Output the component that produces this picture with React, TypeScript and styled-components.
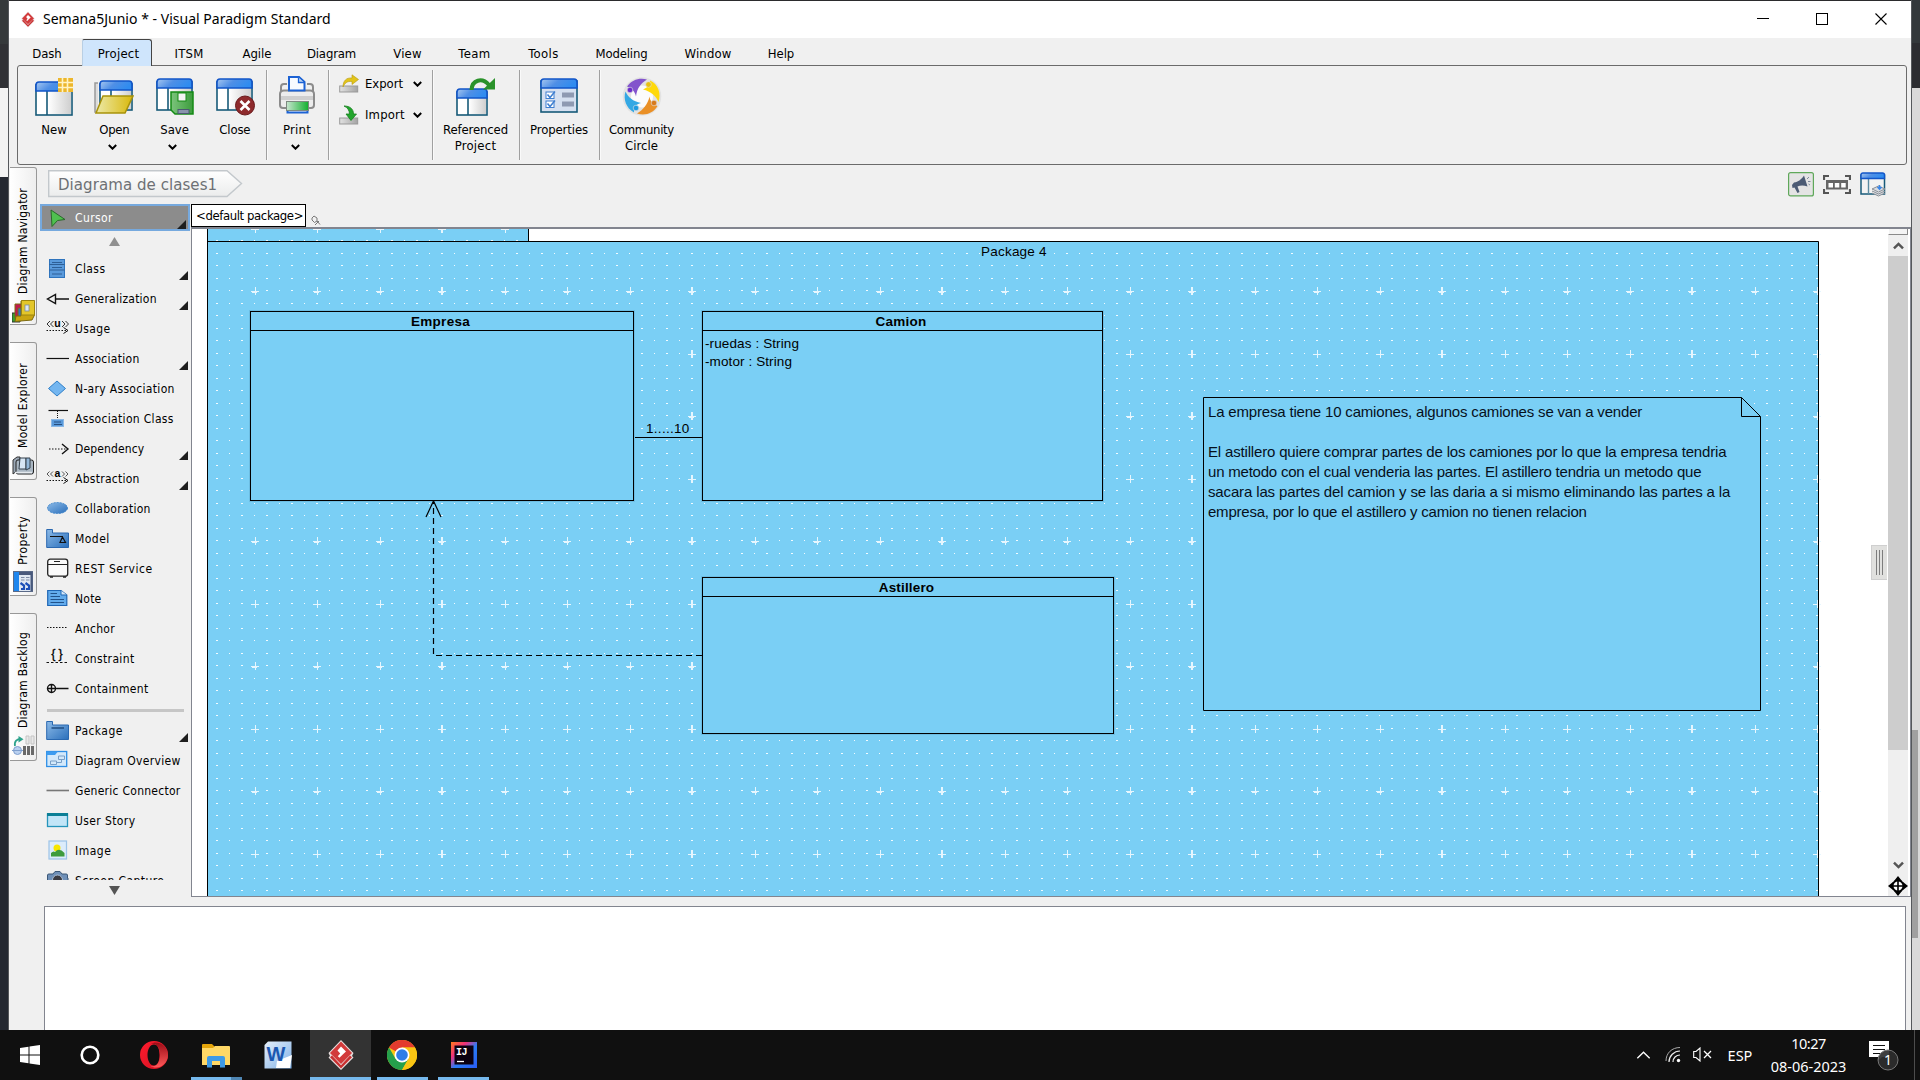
import React from "react";
import styled, { createGlobalStyle, css } from "styled-components";

const ui = `"DejaVu Sans Condensed", "DejaVu Sans", sans-serif`;
const segoe = `"Noto Sans", "Open Sans", sans-serif`;
const arial = `"Liberation Sans", Arial, sans-serif`;

const GlobalStyle = createGlobalStyle`
  *, *::before, *::after { box-sizing: border-box; }
  html, body { margin: 0; padding: 0; background: #fff; overflow: hidden; }
  svg { display: block; flex: none; }
`;

/* ---------- text ---------- */

const Label = styled.span<{ $ls?: number; $size?: number }>`
  font-family: ${ui};
  font-size: ${(p) => p.$size ?? 13}px;
  letter-spacing: ${(p) => p.$ls ?? 0}px;
  line-height: 16px;
  white-space: nowrap;
`;

/* ---------- shell ---------- */

const Desktop = styled.div`
  display: flex;
  flex-direction: column;
  width: 1920px;
  height: 1080px;
  overflow: hidden;
  background: #f0f0f0;
  color: #000;
  font-family: ${ui};
`;

const WorkArea = styled.div`
  display: flex;
  height: 1030px;
`;

const LeftEdge = styled.div`
  width: 9px;
  border-right: 1px solid #55585c;
  background: linear-gradient(#35393b 0 44px, #303135 44px 88px, #f3f3f3 88px 177px, #242831 177px);
`;

const RightEdge = styled.div`
  width: 9px;
  border-left: 1px solid #55585c;
  display: flex;
  flex-direction: column;
  background: linear-gradient(#33383b 0 43px, #2c2d31 43px 88px, #d9d9d9 88px);
`;

const RightThumb = styled.div`
  margin-top: 730px;
  width: 6px;
  height: 208px;
  background: #a0a0a0;
`;

const Window = styled.div`
  flex: 1;
  display: flex;
  flex-direction: column;
  min-width: 0;
  border-top: 1px solid #2b2b2d;
  background: #f0f0f0;
`;

const TitleBar = styled.div`
  display: flex;
  align-items: center;
  height: 37px;
  padding: 0 24px 1px 12px;
  background: #fff;
`;

const Title = styled(Label)`
  font-family: ${segoe};
  margin-left: 8px;
  flex: 1;
  line-height: 20px;
`;

const WindowControls = styled.div`
  display: flex;
  gap: 47px;
`;

const MenuBar = styled.div`
  display: flex;
  height: 27px;
  padding: 1px 0 0 3px;
`;

const MenuItem = styled.div<{ $w: number; $active?: boolean }>`
  display: flex;
  align-items: center;
  justify-content: center;
  width: ${(p) => p.$w}px;
  height: 27px;
  padding-top: 2px;
  ${(p) =>
    p.$active &&
    css`
      position: relative;
      z-index: 1;
      padding-left: 3px;
      background: #cfe5fc;
      border: 1px solid #444;
      border-left-color: #b9cfe4;
      border-bottom: 0;
      border-radius: 2px 3px 0 0;
    `}
`;

const Ribbon = styled.div`
  display: flex;
  height: 100px;
  margin: 0 4px 0 8px;
  padding: 4px 0 0 6px;
  border: 1px solid #6b6b6b;
  border-radius: 3px;
`;

const Group = styled.div<{ $w: number }>`
  display: flex;
  width: ${(p) => p.$w}px;
  height: 90px;
  padding-right: 1px;
  border-right: 1px solid #a0a0a0;
  box-shadow: 1px 0 0 #fafafa;
`;

const LastGroup = styled(Group)`
  border-right: 0;
  box-shadow: none;
`;

const RibbonButton = styled.div`
  flex: 1;
  display: flex;
  flex-direction: column;
  align-items: center;
  padding-top: 6px;
  text-align: center;
`;

const ButtonCaption = styled.div`
  display: flex;
  flex-direction: column;
  align-items: center;
  margin-top: 6px;
`;

const DropArrow = styled.div`
  margin: 6px 4px 0 0;
`;

const StackedGroup = styled(Group)`
  flex-direction: column;
  gap: 11px;
  padding: 4px 0 0 10px;
`;

const StackedButton = styled.div`
  display: flex;
  align-items: center;
  height: 20px;
  gap: 6px;
`;

const StackedLabel = styled(Label)`
  width: 42px;
`;

const Body = styled.div`
  flex: 1;
  display: flex;
  min-height: 0;
`;

/* ---------- side tabs ---------- */

const SideTabs = styled.div`
  display: flex;
  flex-direction: column;
  gap: 17px;
  width: 31px;
  padding: 2px 0 0 1px;
`;

const SideTab = styled.div<{ $h: number; $gap: number; $pb: number }>`
  display: flex;
  flex-direction: column;
  align-items: center;
  justify-content: flex-end;
  width: 27px;
  height: ${(p) => p.$h}px;
  padding-bottom: ${(p) => p.$pb}px;
  gap: ${(p) => p.$gap}px;
  border: 1px solid #989898;
  border-left: 0;
  border-radius: 0 3px 3px 0;
  background: linear-gradient(90deg, #fff, #eee);
`;

const VerticalLabel = styled(Label)`
  writing-mode: vertical-rl;
  transform: rotate(180deg);
`;

/* ---------- main ---------- */

const Main = styled.div`
  flex: 1;
  display: flex;
  flex-direction: column;
  min-width: 0;
`;

const PathBar = styled.div`
  display: flex;
  align-items: center;
  justify-content: space-between;
  height: 39px;
  padding: 0 25px 0 8px;
`;

const Crumb = styled.div`
  display: grid;
  width: 195px;
  height: 28px;
  margin-top: -2px;
  & > * {
    grid-area: 1 / 1;
  }
`;

const CrumbText = styled(Label)`
  align-self: center;
  padding: 1px 0 0 10px;
  color: #6d7074;
  line-height: 24px;
`;

const PathTools = styled.div`
  display: flex;
  align-items: center;
  gap: 9px;
`;

const Editor = styled.div`
  display: flex;
  height: 693px;
`;

const Palette = styled.div`
  display: flex;
  flex-direction: column;
  width: 150px;
  height: 693px;
`;

const CursorRow = styled.div`
  display: flex;
  align-items: center;
  height: 27px;
  border: 2px solid #76a9de;
  background: #8c8c8c;
  color: #fff;
  padding: 1px 0 0 6px;
  gap: 9px;
`;

const ScrollArrow = styled.div<{ $h: number; $up?: boolean }>`
  display: flex;
  align-items: center;
  justify-content: center;
  height: ${(p) => p.$h}px;
  padding: ${(p) => (p.$up ? "0 2px 3px 0" : "4px 2px 0 0")};
`;

const ToolList = styled.div`
  height: 626px;
  overflow: hidden;
  padding-left: 6px;
`;

const Tool = styled.div`
  display: flex;
  align-items: center;
  height: 30px;
  gap: 5px;
`;

const CornerBox = styled.div<{ $lift?: number }>`
  flex: 1;
  display: flex;
  justify-content: flex-end;
  align-self: flex-end;
  padding: 0 2px ${(p) => p.$lift ?? 0}px 0;
`;

const ToolDivider = styled.div`
  width: 137px;
  height: 3px;
  margin: 5px 0 4px 1px;
  background: #c6c6c6;
`;

const DiagramPane = styled.div`
  flex: 1;
  display: flex;
  flex-direction: column;
  min-width: 0;
  margin-left: 1px;
`;

const PackageBar = styled.div`
  display: flex;
  height: 23px;
  align-items: flex-end;
  gap: 5px;
`;

const PackageName = styled.div`
  display: flex;
  align-items: center;
  width: 115px;
  height: 23px;
  padding-left: 4px;
  border: 1px solid #000;
  background: #fff;
`;

const CanvasFrame = styled.div`
  display: flex;
  height: 670px;
  border: 1px solid #82858f;
  border-top-width: 2px;
  background: #fff;
`;

const Canvas = styled.div`
  position: relative;
  flex: 1;
  overflow: hidden;
`;

const Grid = styled.svg`
  position: absolute;
  left: 0;
  top: 0;
`;

const Handle = styled.div`
  position: absolute;
  right: 1px;
  top: 316px;
  width: 16px;
  height: 35px;
  display: flex;
  justify-content: center;
  gap: 2px;
  padding: 4px 1px 4px 0;
  border: 1px solid #cfcfcf;
  border-right: 0;
  background: #e0e0de;
  & > i {
    width: 1px;
    background: #7d7d7d;
  }
`;

const ClassNode = styled.div<{ $x: number; $y: number; $w: number; $h: number }>`
  position: absolute;
  left: ${(p) => p.$x - 192}px;
  top: ${(p) => p.$y - 229}px;
  width: ${(p) => p.$w}px;
  height: ${(p) => p.$h}px;
  border: 1px solid #000;
  background: #7acff5;
  box-shadow: 0 0 0 1px rgba(40, 90, 120, 0.15);
`;

const ClassTitle = styled.div`
  display: flex;
  align-items: center;
  justify-content: center;
  height: 19px;
  padding: 2px 3px 0 0;
  border-bottom: 1px solid #000;
`;

const NodeText = styled(Label)<{ $bold?: boolean }>`
  font-family: ${arial};
  font-weight: ${(p) => (p.$bold ? 700 : 400)};
  line-height: 18px;
`;

const Attributes = styled.div`
  display: flex;
  flex-direction: column;
  padding: 4px 0 0 2px;
`;

const FloatText = styled(NodeText)<{ $x: number; $y: number }>`
  position: absolute;
  left: ${(p) => p.$x - 192}px;
  top: ${(p) => p.$y - 229}px;
`;

const NoteNode = styled.div`
  position: absolute;
  left: 1011px;
  top: 168px;
  width: 558px;
  height: 314px;
`;

const NoteShape = styled.svg`
  position: absolute;
  inset: 0;
`;

const NoteText = styled.div`
  position: relative;
  display: flex;
  flex-direction: column;
  padding: 5px 0 0 5px;
`;

const NoteLine = styled(Label)`
  font-family: ${arial};
  color: #06101c;
  line-height: 20px;
  height: 20px;
`;

const ScrollColumn = styled.div`
  display: flex;
  flex-direction: column;
  align-items: center;
  width: 20px;
  margin-right: 2px;
  background: #efefef;
`;

const SplitGrip = styled.div`
  width: 20px;
  height: 6px;
  border: 1px solid #8a8a8a;
  border-top: 0;
  border-left-color: #fff;
  background: #f4f4f4;
`;

const ScrollBtn = styled.div<{ $h: number }>`
  display: flex;
  align-items: center;
  justify-content: center;
  width: 20px;
  height: ${(p) => p.$h}px;
`;

const ScrollThumb = styled.div`
  width: 20px;
  height: 494px;
  background: #cdcdcd;
`;

const ScrollTrack = styled.div`
  flex: 1;
`;

const BottomPanel = styled.div`
  flex: 1;
  margin: 9px 5px 0 4px;
  border: 1px solid #82858f;
  border-bottom: 0;
  background: #fff;
`;

/* ---------- taskbar ---------- */

const Taskbar = styled.div`
  display: flex;
  height: 50px;
  background: #101010;
  color: #fff;
`;

const TaskCell = styled.div<{ $w: number; $active?: boolean }>`
  display: flex;
  flex-direction: column;
  align-items: center;
  width: ${(p) => p.$w}px;
  height: 50px;
  background: ${(p) => (p.$active ? "#333" : "transparent")};
`;

const TaskIcon = styled.div<{ $running?: boolean }>`
  flex: 1;
  display: flex;
  align-items: center;
  padding-top: ${(p) => (p.$running ? 3 : 0)}px;
`;

const Underline = styled.div<{ $w: number; $split?: boolean }>`
  width: ${(p) => p.$w}px;
  height: 3px;
  background: ${(p) => (p.$split ? "linear-gradient(90deg,#76b9ed 0 40px,#4f86b3 40px)" : "#76b9ed")};
`;

const Spacer = styled.div`
  flex: 1;
`;

const Tray = styled.div`
  display: flex;
  align-items: center;
  padding-bottom: 1px;
`;

const TrayLabel = styled(Label)`
  font-family: ${segoe};
`;

const TrayItem = styled.div<{ $w: number }>`
  display: flex;
  align-items: center;
  justify-content: center;
  width: ${(p) => p.$w}px;
`;

const Clock = styled.div`
  display: flex;
  flex-direction: column;
  align-items: center;
  gap: 7px;
  width: 89px;
`;

const ShowDesktop = styled.div`
  width: 6px;
  height: 50px;
  border-left: 1px solid #4c4c4c;
`;

/* ---------- icons ---------- */

const HiddenDefs = styled.svg`
  position: absolute;
  width: 0;
  height: 0;
`;

const Gradients = () => (
  <HiddenDefs>
    <defs>
      <linearGradient id="bar" x1="0" y1="0" x2="1" y2="0.3">
        <stop offset="0" stopColor="#a8c8f0" />
        <stop offset="0.5" stopColor="#4f8fe6" />
        <stop offset="1" stopColor="#2f8cf0" />
      </linearGradient>
      <linearGradient id="pane" x1="0" y1="0" x2="1" y2="0">
        <stop offset="0" stopColor="#fff" />
        <stop offset="1" stopColor="#cfcfcf" />
      </linearGradient>
      <linearGradient id="gold" x1="0" y1="0" x2="1" y2="0">
        <stop offset="0" stopColor="#ece9a8" />
        <stop offset="1" stopColor="#d9b80a" />
      </linearGradient>
      <linearGradient id="blue" x1="0" y1="0" x2="1" y2="1">
        <stop offset="0" stopColor="#8dbbe8" />
        <stop offset="1" stopColor="#2a6fbb" />
      </linearGradient>
      <linearGradient id="green" x1="0" y1="0" x2="1" y2="0">
        <stop offset="0" stopColor="#7cc47c" />
        <stop offset="1" stopColor="#3c9c3c" />
      </linearGradient>
      <linearGradient id="tray" x1="0" y1="0" x2="1" y2="0">
        <stop offset="0" stopColor="#c8e6d0" />
        <stop offset="1" stopColor="#12b02e" />
      </linearGradient>
      <linearGradient id="grey" x1="0" y1="0" x2="1" y2="0">
        <stop offset="0" stopColor="#e2e2e2" />
        <stop offset="1" stopColor="#a4a4a4" />
      </linearGradient>
      <linearGradient id="crumb" x1="0" y1="0" x2="0" y2="1">
        <stop offset="0" stopColor="#ffffff" />
        <stop offset="1" stopColor="#ebecec" />
      </linearGradient>
      <linearGradient id="opera" x1="0" y1="0" x2="1" y2="1">
        <stop offset="0" stopColor="#ff1b2d" />
        <stop offset="1" stopColor="#d01222" />
      </linearGradient>
      <linearGradient id="operaDark" x1="0" y1="0" x2="0" y2="1">
        <stop offset="0" stopColor="#9a0c16" />
        <stop offset="1" stopColor="#ff5a5a" />
      </linearGradient>
      <linearGradient id="ij" x1="0" y1="0" x2="1" y2="1">
        <stop offset="0" stopColor="#fe7a1c" />
        <stop offset="0.3" stopColor="#f0307a" />
        <stop offset="0.55" stopColor="#2a7cf5" />
        <stop offset="1" stopColor="#2a5cf5" />
      </linearGradient>
      <linearGradient id="word" x1="0" y1="0" x2="1" y2="1">
        <stop offset="0" stopColor="#e6f0fb" />
        <stop offset="1" stopColor="#7fb0e6" />
      </linearGradient>
    </defs>
  </HiddenDefs>
);

const VpLogo = ({ w, h }: { w: number; h: number }) => (
  <svg width={w} height={h} viewBox="0 0 26 30">
    <path d="M13 0 25.500 13 24 16 25.500 17.500 13 30 .5 17.500 2 16 .5 13Z" fill="#e9dede" />
    <path d="M13 28.500 2 17.300 4 15.500 13 25.300 22 15.500 24 17.300Z" fill="#c92f30" />
    <path d="M13 1.500 24 13 13 24 2 13Z" fill="#d23a3b" />
    <path d="M13 6.500 18 11.500 14.500 14.700 11.500 17.800 9.800 16.200 12.200 13.500 9.500 10.500Z" fill="#fff" />
  </svg>
);

const AppWindow = ({ x = 1, y = 1, w = 37, h = 36 }) => (
  <g>
    <rect x={x} y={y + 3} width={w} height={h - 3} fill="#fff" stroke="#175a78" strokeWidth="1.6" />
    <rect x={x + 12} y={y + 9} width={w - 13} height={h - 10} fill="url(#pane)" />
    <path d={`M${x + 11} ${y + 9}V${y + h}`} stroke="#175a78" strokeWidth="1.6" />
    <path
      d={`M${x} ${y + 9}V${y + 3}Q${x} ${y} ${x + 3} ${y}H${x + w - 3}Q${x + w} ${y} ${x + w} ${y + 3}V${y + 9}Z`}
      fill="url(#bar)"
      stroke="#1255c8"
      strokeWidth="1.6"
    />
  </g>
);

const NewIcon = () => (
  <svg width="40" height="40" viewBox="0 0 40 40">
    <AppWindow x={2} y={6} w={36} h={33} />
    <rect x="24" y="2" width="15" height="14" fill="#ecb62c" />
    <path d="M28.500 2V16M33.500 2V16M24 6.500H39M24 11.500H39" stroke="#fff3c4" strokeWidth="1.600" />
  </svg>
);

const OpenIcon = () => (
  <svg width="40" height="40" viewBox="0 0 40 40">
    <path d="M4 7H1V36H4" fill="#ddd" stroke="#999" strokeWidth="1.500" />
    <AppWindow x={6} y={5} w={32} h={29} />
    <path d="M9 20H39L31 37H2Z" fill="url(#gold)" stroke="#a8920a" strokeWidth="1.500" />
  </svg>
);

const SaveIcon = () => (
  <svg width="40" height="40" viewBox="0 0 40 40">
    <AppWindow x={2} y={3} w={35} h={31} />
    <path d="M16 16H38V38H20L16 34Z" fill="url(#green)" stroke="#148a14" strokeWidth="1.500" />
    <rect x="23" y="17" width="8" height="8" fill="#f4f4f4" stroke="#148a14" />
    <rect x="23" y="33.500" width="11" height="4" fill="#8a93ad" stroke="#4a5a70" />
  </svg>
);

const CloseIcon = () => (
  <svg width="40" height="40" viewBox="0 0 40 40">
    <AppWindow x={2} y={3} w={35} h={31} />
    <circle cx="30" cy="29.500" r="9.500" fill="#8e2a2c" stroke="#6a1a1c" />
    <path d="M25.500 25 34.500 34M34.500 25 25.500 34" stroke="#fff" strokeWidth="2.600" />
  </svg>
);

const PrintIcon = () => (
  <svg width="40" height="40" viewBox="0 0 40 40">
    <path d="M4 17V11Q4 8 7 8H10M36 17V11Q36 8 33 8H30" fill="none" stroke="#8c8c8c" strokeWidth="2" />
    <path d="M7 14.500H33Q37 14.500 37 18V29Q37 32 34 32H6Q3 32 3 29V18Q3 14.500 7 14.500Z" fill="#ededed" stroke="#8c8c8c" strokeWidth="2" />
    <rect x="4" y="20" width="32" height="4" fill="#cfcfcf" />
    <path d="M12 1H22L27.500 6V14.500H12Z" fill="#f7faff" stroke="#1c62d4" strokeWidth="2" />
    <path d="M21.500 1.500V6.500H27" fill="#bcd6f6" stroke="#1c62d4" strokeWidth="1.300" />
    <path d="M10.500 27V36.500H30.500V27" fill="#fff" stroke="#1c62d4" strokeWidth="2" />
    <rect x="9.500" y="25.500" width="22" height="9" fill="url(#tray)" stroke="#7d8a80" />
  </svg>
);

const ExportIcon = () => (
  <svg width="20" height="20" viewBox="0 0 20 20">
    <rect x=".7" y="12" width="18" height="6" fill="url(#grey)" stroke="#999" />
    <path d="M4 13C4 7 7 3.500 13 4V.8L19.500 5.500 13 10.500V7.500C8 7 6 9 4 13Z" fill="#e2c41a" stroke="#b79a10" strokeWidth=".6" />
  </svg>
);

const ImportIcon = () => (
  <svg width="20" height="20" viewBox="0 0 20 20">
    <rect x=".7" y="13" width="18" height="6" fill="url(#grey)" stroke="#999" />
    <path d="M5 1C11 1 14.500 4 14.500 9H17.500L12 15.500 7 9H10.500C10.300 5 8.500 2.500 5 1Z" fill="#22a52c" stroke="#15801d" strokeWidth=".8" />
  </svg>
);

const ReferencedIcon = () => (
  <svg width="40" height="40" viewBox="0 0 40 40">
    <AppWindow x={1} y={13} w={30} h={26} />
    <path d="M15.500 14C16 4 26 1 33 9" fill="none" stroke="#2a922a" strokeWidth="4" />
    <path d="M39 2V13.500H27Z" fill="#2a922a" />
  </svg>
);

const PropertiesIcon = () => (
  <svg width="40" height="40" viewBox="0 0 40 40">
    <rect x="2" y="5" width="36" height="31" fill="#d6e0f0" stroke="#175a78" strokeWidth="1.600" />
    <path d="M2 12V6Q2 3 5 3H35Q38 3 38 6V12Z" fill="url(#bar)" stroke="#1255c8" strokeWidth="1.600" />
    {[16, 25].map((y) => (
      <g key={y}>
        <rect x="7" y={y} width="8" height="6.500" fill="#fff" stroke="#3f7fd0" />
        <path d={`M8.500 ${y + 2.5}l2.500 3 5-6`} fill="none" stroke="#3f7fd0" strokeWidth="1.500" />
        <rect x="23" y={y + 0.5} width="12" height="5" fill="#8f9ab2" />
      </g>
    ))}
  </svg>
);

const CommunityIcon = () => (
  <svg width="40" height="40" viewBox="0 0 40 40">
    <circle cx="20" cy="20.500" r="19.300" fill="#e2e2e2" />
    <circle cx="20" cy="20.500" r="11" fill="#fbfbfb" />
    <path d="M5 10.500C10 4 17 1.500 25 3.500 19 7 15 12 14 20.500 13 16 10 12 5 10.500Z" fill="#8354cc" />
    <path d="M28 4.500C36 8 39.500 17 36.500 26 34 20 29 15.500 21 13.500 25 12 28 9 28 4.500Z" fill="#ffd90a" />
    <path d="M35.500 30C31 37.500 23 40 15 37.500 21 34 26 28 27.500 20.500 28 25 31 28.500 35.500 30Z" fill="#ea9026" />
    <path d="M12 36.500C4 32 1 23 3.500 15.500 6 21 11 25.500 19 27 14 28 12 31 12 36.500Z" fill="#34a8e4" />
    <circle cx="8" cy="14" r="2.800" fill="#6b2ecb" stroke="#e2e2e2" strokeWidth=".6" />
    <circle cx="26.500" cy="8.500" r="2.800" fill="#e8c012" stroke="#e2e2e2" strokeWidth=".6" />
    <circle cx="32" cy="27" r="2.800" fill="#d67a1c" stroke="#e2e2e2" strokeWidth=".6" />
    <circle cx="14" cy="32" r="2.800" fill="#1f9be0" stroke="#e2e2e2" strokeWidth=".6" />
  </svg>
);

const Chevron = ({ w = 9, h = 6, color = "#000", sw = 2, up = false }) => (
  <svg width={w} height={h} viewBox="0 0 9 6">
    <path d={up ? "M.8 5 4.500 1.300 8.200 5" : "M.8 1 4.500 4.700 8.200 1"} fill="none" stroke={color} strokeWidth={sw} />
  </svg>
);

const Corner = () => (
  <svg width="9" height="9" viewBox="0 0 9 9">
    <path d="M9 0V9H0Z" fill="#1e1e1e" />
  </svg>
);

const NavigatorIcon = () => (
  <svg width="23" height="24" viewBox="0 0 23 24">
    <path d="M0 14H8V23H0Z" fill="#35a030" stroke="#333" />
    <path d="M3 5H12V19H3Z" fill="#c01850" stroke="#7c6a10" />
    <path d="M6 9H15V20H6Z" fill="#2f77c8" stroke="#7c6a10" />
    <path d="M3 22.500 20 21 22.500 16V2H9V17H4Z" fill="#c9a511" stroke="#7c6a10" />
    <path d="M9.500 1.500H22.500V16H9.500Z" fill="#e3c62a" stroke="#9c8410" />
    <rect x="13" y="6" width="4" height="6" fill="#dce8f4" stroke="#7a8aa0" strokeWidth=".8" />
  </svg>
);

const ModelIcon = () => (
  <svg width="23" height="20" viewBox="0 0 23 20">
    <path d="M1 4 5 1H8L6 14 1 18Z" fill="#9aa7b5" stroke="#333" />
    <rect x="4" y="4" width="17.500" height="14" rx="2" fill="#a9b6c2" stroke="#222" />
    <path d="M8 2H14V13H7Z" fill="#d7e6f4" stroke="#34404c" />
    <path d="M14 2H18V12L14 14Z" fill="#93b7d8" stroke="#34404c" />
    <path d="M3 16.500H20" stroke="#e4e9ee" strokeWidth="1.500" />
  </svg>
);

const PropertyIcon = () => (
  <svg width="21" height="22" viewBox="0 0 21 22">
    <rect x=".5" y=".5" width="19" height="20" fill="#dfe7f2" stroke="#5a6a88" />
    <rect x="1" y="1" width="5" height="19" fill="#1e86ee" />
    <path d="M6 1H19V4H6ZM17.500 1H19.500V20H17.500Z" fill="#48597c" />
    <path d="M8 6.500H11.500M13 6.500H16.500M8 9H11.500M13 9H16.500" stroke="#7e8da8" />
    <path d="M7.500 12 11 14.500V18H8M12.500 12 16 14.500V18H13" fill="none" stroke="#1b4fb8" strokeWidth="2.200" />
  </svg>
);

const BacklogIcon = () => (
  <svg width="23" height="21" viewBox="0 0 23 21">
    <path d="M3 11C2 6 5 4 9 4" fill="none" stroke="#2da38c" strokeWidth="1.800" />
    <path d="M6.500 1 11.500 4.200 6.500 7.500Z" fill="#2da38c" />
    <circle cx="5.500" cy="15.500" r="4" fill="#b9d0f0" stroke="#7f9fce" />
    <path d="M0 15.500H11" stroke="#7f9fce" />
    <path d="M14 1H17V9H14ZM19 1H22V9H19Z" fill="#e8e8e8" stroke="#c4c4c4" />
    <path d="M12.500 11V20M16.500 11V20M20.500 11V20" stroke="#6a6a6a" strokeWidth="3" />
  </svg>
);

const MegaphoneIcon = () => (
  <svg width="26" height="25" viewBox="0 0 26 25">
    <rect x=".6" y=".6" width="24.800" height="23.300" rx="2" fill="#e4e4e4" stroke="#5fa85a" strokeWidth="1.200" />
    <path d="M4 13 6 10.500C10 10 14 7 16 3.500L19.500 14.500C16 13 12 13 9.500 14.500L11.500 20 9.500 21 6.500 15.500 4.500 16Z" fill="#4c5b74" />
    <path d="M19 7 21 5M20 9.500H22.500M20.500 12 22 13" stroke="#7f8a9c" />
  </svg>
);

const FilmIcon = () => (
  <svg width="28" height="19" viewBox="0 0 28 19">
    <path d="M1 5V1H6M22 1H27V5M27 14V18H22M6 18H1V14" fill="none" stroke="#555" strokeWidth="2.200" />
    <rect x="3" y="5" width="22" height="9.500" fill="#666" />
    <path d="M5.500 8H10V12.500H5.500ZM11.800 8H16.300V12.500H11.800ZM18.200 8H22.700V12.500H18.200Z" fill="#fff" />
  </svg>
);

const LayersIcon = () => (
  <svg width="26" height="25" viewBox="0 0 26 25">
    <rect x="1" y="3" width="23.500" height="19" fill="#f2f2f2" stroke="#175a78" strokeWidth="1.500" />
    <path d="M8.500 7V22" stroke="#5a8aa0" strokeWidth="1.400" />
    <path d="M1 6.500V3Q1 1 3 1H22.500Q24.500 1 24.500 3V6.500Z" fill="url(#bar)" stroke="#1255c8" strokeWidth="1.400" />
    <path d="M12 17 18.500 14 25 17 18.500 20ZM12 19 18.500 22 25 19M12 21 18.500 24 25 21" fill="#d8dce2" stroke="#8a8f96" />
    <path d="M19.500 13V17M17.500 15 19.500 17.200 21.500 15" stroke="#3a86e8" strokeWidth="1.500" fill="none" />
  </svg>
);

const toolIcon = (n: React.ReactNode) => (
  <svg width="24" height="24" viewBox="0 0 24 24" overflow="visible">
    {n}
  </svg>
);

const toolIcons: Record<string, React.ReactNode> = {
  class: toolIcon(
    <>
      <rect x="3.500" y="2.500" width="15" height="18" fill="#5a9adb" stroke="#2f74bd" />
      <path d="M6 5.500H16M3.500 7.500H18.500M6 10.500H16M3.500 13H18.500M6 17H16" stroke="#2e5f96" />
    </>,
  ),
  generalization: toolIcon(<path d="M9.500 12H23M9.500 7.500V16.500L1.500 12Z" fill="none" stroke="#111" strokeWidth="1.400" />),
  usage: toolIcon(
    <>
      <text x="11.500" y="10" textAnchor="middle" fontSize="10.500" fontWeight="700" fontFamily="Liberation Sans, sans-serif">u</text>
      <path d="M4 4 1 7 4 10M7.500 4 4.500 7 7.500 10M16 4 19 7 16 10M19.500 4 22.500 7 19.500 10" fill="none" stroke="#333" />
      <path d="M.5 13.500H20" stroke="#111" strokeWidth="1.200" strokeDasharray="1.500 1.500" />
      <path d="M17.500 10.500 22 13.500 17.500 16.500" fill="none" stroke="#111" />
    </>,
  ),
  association: toolIcon(<path d="M.5 11.500H23" stroke="#111" strokeWidth="1.200" />),
  nary: toolIcon(<path d="M11 4 19.500 11.500 11 19 2.500 11.500Z" fill="#74b6f0" stroke="#2f7fc8" />),
  assocClass: toolIcon(
    <>
      <path d="M2.500 3.500H22" stroke="#111" strokeWidth="1.200" />
      <path d="M11.500 4V12" stroke="#111" strokeDasharray="1 1" />
      <rect x="5.500" y="12.500" width="12" height="7" fill="#5a9adb" stroke="#8ab8e6" />
      <path d="M8 15H15M8 17.500H16" stroke="#274f80" />
    </>,
  ),
  dependency: toolIcon(
    <>
      <path d="M3 12H20" stroke="#111" strokeWidth="1.200" strokeDasharray="1.500 1.500" />
      <path d="M16 7 22 12 16 17" fill="none" stroke="#111" strokeWidth="1.400" />
    </>,
  ),
  abstraction: toolIcon(
    <>
      <text x="11.500" y="10" textAnchor="middle" fontSize="10.500" fontWeight="700" fontFamily="Liberation Sans, sans-serif">a</text>
      <path d="M3.500 4.500 1 7 3.500 9.500M7 4.500 4.500 7 7 9.500M16 4.500 18.500 7 16 9.500M19.500 4.500 22 7 19.500 9.500" fill="none" stroke="#555" />
      <path d="M.5 13.500H20" stroke="#111" strokeWidth="1.200" strokeDasharray="1.500 1.500" />
      <path d="M17.500 10.500 22 13.500 17.500 16.500" fill="none" stroke="#111" />
    </>,
  ),
  collaboration: toolIcon(<ellipse cx="11.500" cy="11" rx="10" ry="5.500" fill="url(#blue)" stroke="#3f86cc" strokeDasharray="2 1" />),
  model: toolIcon(
    <>
      <path d="M.7 20.500V2.500H6.500V6H22.500V20.500Z" fill="url(#blue)" stroke="#2a68b0" />
      <path d="M4 9.500H17M16.500 10 14 15.500H19.500Z" fill="none" stroke="#111" strokeWidth="1.200" />
    </>,
  ),
  rest: toolIcon(
    <>
      <rect x="1.700" y="2.200" width="20" height="17" rx="2.500" fill="#fafafa" stroke="#222" strokeWidth="1.300" />
      <path d="M2 7.500H21.500M8 4.500H14" stroke="#222" />
      <path d="M4 20H7M17 20H20" stroke="#222" strokeWidth="1.500" />
    </>,
  ),
  note: toolIcon(
    <>
      <path d="M1.700 3.500H15L20.800 8V18.500H1.700Z" fill="#62abec" stroke="#1f66b4" strokeWidth="1.200" />
      <path d="M4.500 6.500H11M4.500 9.500H14M4.500 12.500H18M4.500 15.500H18" stroke="#21528a" />
      <path d="M15 3.500V8H20.800" fill="#d4e8fa" stroke="#1f66b4" />
    </>,
  ),
  anchor: toolIcon(<path d="M1 10.500H22" stroke="#111" strokeDasharray="1.500 1.500" />),
  constraint: toolIcon(
    <>
      <text x="12.500" y="11" textAnchor="middle" fontSize="12.500" letterSpacing="3" fontFamily="Liberation Sans, sans-serif" stroke="#000" strokeWidth=".3">{"{}"}</text>
      <path d="M.5 15.500H23" stroke="#111" strokeDasharray="2.500 2" />
    </>,
  ),
  containment: toolIcon(<path d="M9.500 11.500A4 4 0 1 1 1.500 11.500 4 4 0 1 1 9.500 11.500H22.500M1.500 11.500H9.500M5.500 7.500V15.500" fill="none" stroke="#111" strokeWidth="1.400" />),
  package: toolIcon(
    <>
      <path d="M.7 20.500V2.500H6.500V6H22.500V20.500Z" fill="url(#blue)" stroke="#2a68b0" />
      <path d="M5.500 9H18" stroke="#1f4c80" strokeWidth="1.500" />
    </>,
  ),
  overview: toolIcon(
    <>
      <rect x=".7" y="2.500" width="20" height="15" fill="#d3e9fb" stroke="#2e8fe6" strokeWidth="1.300" />
      <path d="M.7 2.500H12L9 6H.7Z" fill="#3d9cf0" />
      <path d="M4.500 12H10.500V15.500H4.500ZM12.500 7H18.500V10.500H12.500ZM10.500 13.500H15.500V10.500" fill="none" stroke="#7a9fc6" />
    </>,
  ),
  generic: toolIcon(<path d="M.5 11.500H23" stroke="#777" strokeWidth="1.600" />),
  story: toolIcon(
    <>
      <rect x="1.500" y="5" width="20" height="12.500" fill="#c2e5f7" stroke="#2594bb" strokeWidth="1.300" />
      <path d="M1 5.500H22" stroke="#0b7f96" strokeWidth="3" />
    </>,
  ),
  image: toolIcon(
    <>
      <rect x="3" y="2" width="17.500" height="18" fill="#dcecfb" stroke="#9cc4e8" strokeWidth="1.200" />
      <circle cx="11" cy="9" r="3.500" fill="#f7e600" />
      <path d="M5 17.500V14Q7.500 11.500 9 13 13 8 18.500 14V17.500Z" fill="#3d9b3d" />
    </>,
  ),
  capture: toolIcon(
    <>
      <path d="M1.500 9V6Q1.500 5 3 5H7L9 2.500H14L16 5H20Q21.500 5 21.500 6V9H22V20H1.500Z" fill="#6f90b8" stroke="#3c5878" />
      <circle cx="11.500" cy="11" r="5" fill="#3b3b42" stroke="#aebfd4" />
    </>,
  ),
};

type ToolRow = { icon: string; text: string; ls: number; more?: boolean };

const modelTools: ToolRow[] = [
  { icon: "class", text: "Class", ls: 0.4, more: true },
  { icon: "generalization", text: "Generalization", ls: 0.23, more: true },
  { icon: "usage", text: "Usage", ls: 0.4 },
  { icon: "association", text: "Association", ls: 0.28, more: true },
  { icon: "nary", text: "N-ary Association", ls: 0.32 },
  { icon: "assocClass", text: "Association Class", ls: 0.32 },
  { icon: "dependency", text: "Dependency", ls: 0.13, more: true },
  { icon: "abstraction", text: "Abstraction", ls: 0.27, more: true },
  { icon: "collaboration", text: "Collaboration", ls: 0.29 },
  { icon: "model", text: "Model", ls: 0.45 },
  { icon: "rest", text: "REST Service", ls: 0.55 },
  { icon: "note", text: "Note", ls: 0.23 },
  { icon: "anchor", text: "Anchor", ls: 0.33 },
  { icon: "constraint", text: "Constraint", ls: 0.35 },
  { icon: "containment", text: "Containment", ls: 0.33 },
];

const generalTools: ToolRow[] = [
  { icon: "package", text: "Package", ls: 0.45, more: true },
  { icon: "overview", text: "Diagram Overview", ls: 0.31 },
  { icon: "generic", text: "Generic Connector", ls: 0.27 },
  { icon: "story", text: "User Story", ls: 0.39 },
  { icon: "image", text: "Image", ls: 0.5 },
  { icon: "capture", text: "Screen Capture", ls: 0.43 },
];

const menus: [name: string, width: number, spacing: number][] = [
  ["Dash", 70, -0.1],
  ["Project", 70, 0.25],
  ["ITSM", 74, 0.2],
  ["Agile", 62, 0],
  ["Diagram", 87, -0.15],
  ["View", 65, 0.15],
  ["Team", 69, 0.4],
  ["Tools", 69, 0.35],
  ["Modeling", 87, -0.15],
  ["Window", 86, 0.15],
  ["Help", 60, -0.1],
];

const noteLines: [text: string, spacing: number][] = [
  ["La empresa tiene 10 camiones, algunos camiones se van a vender", -0.18],
  ["\u00a0", 0],
  ["El astillero quiere comprar partes de los camiones por lo que la empresa tendria", -0.17],
  ["un metodo con el cual venderia las partes. El astillero tendria un metodo que", -0.21],
  ["sacara las partes del camion y se las daria a si mismo eliminando las partes a la", -0.14],
  ["empresa, por lo que el astillero y camion no tienen relacion", -0.22],
];

const ToolItem = ({ row }: { row: ToolRow }) => (
  <Tool>
    {toolIcons[row.icon]}
    <Label $size={12} $ls={row.ls}>{row.text}</Label>
    {row.more && (
      <CornerBox $lift={4}>
        <Corner />
      </CornerBox>
    )}
  </Tool>
);

/* Background dots every 12.5px with a cross on every fifth one. */
const gridPaths = () => {
  let dots = "";
  let crosses = "";
  for (let j = -2; j < 54; j++) {
    for (let k = 0; k < 130; k++) {
      const x = Math.ceil(216 + 12.5 * k) - 192;
      const y = Math.floor(253 + 12.5 * j) - 229;
      if (x + 192 > 1818) continue;
      if ((j + 2) % 5 === 0 && k % 5 === 3) {
        crosses += `M${x - 3} ${y + 1}h8v1h-8zM${x + 1} ${y - 3}h1v8h-1z`;
        if (j % 2) crosses += `M${x - 2} ${y + 2}h5v1h-5z`;
        if (k % 4 === 2) crosses += `M${x} ${y - 3}h1v8h-1z`;
      } else {
        const w = k % 2 ? 1 : 2;
        dots += `M${x} ${y}h${w}v1h-${w}z`;
      }
    }
  }
  return { dots, crosses };
};

const grid = gridPaths();

export default function App() {
  return (
    <Desktop>
      <GlobalStyle />
      <Gradients />
      <WorkArea>
        <LeftEdge />
        <Window>
          <TitleBar>
            <VpLogo w={14} h={17} />
            <Title $size={14} $ls={0.02}>Semana5Junio * - Visual Paradigm Standard</Title>
            <WindowControls>
              <svg width="12" height="12"><path d="M0 5.500H12" stroke="#000" /></svg>
              <svg width="12" height="12"><rect x=".5" y=".5" width="11" height="11" fill="none" stroke="#000" /></svg>
              <svg width="12" height="12"><path d="M.5 .5 11.500 11.500M11.500 .5.5 11.500" stroke="#000" strokeWidth="1.100" /></svg>
            </WindowControls>
          </TitleBar>
          <MenuBar>
            {menus.map(([name, w, ls]) => (
              <MenuItem key={name} $w={w} $active={name === "Project"}>
                <Label $ls={ls}>{name}</Label>
              </MenuItem>
            ))}
          </MenuBar>
          <Ribbon>
            <Group $w={243}>
              <RibbonButton>
                <NewIcon />
                <ButtonCaption><Label $ls={0.1}>New</Label></ButtonCaption>
              </RibbonButton>
              <RibbonButton>
                <OpenIcon />
                <ButtonCaption><Label $ls={-0.3}>Open</Label></ButtonCaption>
                <DropArrow><Chevron /></DropArrow>
              </RibbonButton>
              <RibbonButton>
                <SaveIcon />
                <ButtonCaption><Label $ls={-0.05}>Save</Label></ButtonCaption>
                <DropArrow><Chevron /></DropArrow>
              </RibbonButton>
              <RibbonButton>
                <CloseIcon />
                <ButtonCaption><Label $ls={-0.17}>Close</Label></ButtonCaption>
              </RibbonButton>
            </Group>
            <Group $w={62}>
              <RibbonButton>
                <PrintIcon />
                <ButtonCaption><Label $ls={0.2}>Print</Label></ButtonCaption>
                <DropArrow><Chevron /></DropArrow>
              </RibbonButton>
            </Group>
            <StackedGroup $w={104}>
              <StackedButton>
                <ExportIcon />
                <StackedLabel $ls={-0.05}>Export</StackedLabel>
                <Chevron />
              </StackedButton>
              <StackedButton>
                <ImportIcon />
                <StackedLabel $ls={0.15}>Import</StackedLabel>
                <Chevron />
              </StackedButton>
            </StackedGroup>
            <Group $w={87}>
              <RibbonButton>
                <ReferencedIcon />
                <ButtonCaption>
                  <Label $ls={-0.13}>Referenced</Label>
                  <Label $ls={0.25}>Project</Label>
                </ButtonCaption>
              </RibbonButton>
            </Group>
            <Group $w={80}>
              <RibbonButton>
                <PropertiesIcon />
                <ButtonCaption><Label $ls={-0.11}>Properties</Label></ButtonCaption>
              </RibbonButton>
            </Group>
            <LastGroup $w={84}>
              <RibbonButton>
                <CommunityIcon />
                <ButtonCaption>
                  <Label $ls={-0.3}>Community</Label>
                  <Label>Circle</Label>
                </ButtonCaption>
              </RibbonButton>
            </LastGroup>
          </Ribbon>
          <Body>
            <SideTabs>
              <SideTab $h={158} $gap={5} $pb={1}><VerticalLabel $size={12} $ls={0.2}>Diagram Navigator</VerticalLabel><NavigatorIcon /></SideTab>
              <SideTab $h={138} $gap={8} $pb={3}><VerticalLabel $size={12} $ls={0.3}>Model Explorer</VerticalLabel><ModelIcon /></SideTab>
              <SideTab $h={99} $gap={6} $pb={2}><VerticalLabel $size={12} $ls={0.4}>Property</VerticalLabel><PropertyIcon /></SideTab>
              <SideTab $h={148} $gap={7} $pb={4}><VerticalLabel $size={12} $ls={0.24}>Diagram Backlog</VerticalLabel><BacklogIcon /></SideTab>
            </SideTabs>
            <Main>
              <PathBar>
                <Crumb>
                  <svg width="195" height="28">
                    <path d="M.7 .7H179L193.500 13.500 179 26.500H.7Z" fill="url(#crumb)" stroke="#c3c8cc" strokeWidth="1.400" />
                  </svg>
                  <CrumbText $size={16.7} $ls={0.06}>Diagrama de clases1</CrumbText>
                </Crumb>
                <PathTools>
                  <MegaphoneIcon />
                  <FilmIcon />
                  <LayersIcon />
                </PathTools>
              </PathBar>
              <Editor>
                <Palette>
                  <CursorRow>
                    <svg width="18" height="20" viewBox="0 0 18 20">
                      <path d="M3 2 17 11.500 9.500 12.500 4 18.500Z" fill="#4fc04f" stroke="#2a6a2a" />
                    </svg>
                    <Label $size={12} $ls={0.4}>Cursor</Label>
                    <CornerBox><Corner /></CornerBox>
                  </CursorRow>
                  <ScrollArrow $h={23} $up>
                    <svg width="11" height="9"><path d="M5.500 0 11 9H0Z" fill="#909090" /></svg>
                  </ScrollArrow>
                  <ToolList>
                    {modelTools.map((r) => <ToolItem key={r.text} row={r} />)}
                    <ToolDivider />
                    {generalTools.map((r) => <ToolItem key={r.text} row={r} />)}
                  </ToolList>
                  <ScrollArrow $h={17}>
                    <svg width="11" height="9"><path d="M5.500 9 11 0H0Z" fill="#555" /></svg>
                  </ScrollArrow>
                </Palette>
                <DiagramPane>
                  <PackageBar>
                    <PackageName><Label $ls={-0.4}>&lt;default package&gt;</Label></PackageName>
                    <svg width="10" height="12" viewBox="0 0 10 12">
                      <path d="M3 1 6 3V6L3.500 7.500 1 5V3ZM6 6 9 9.500M8 6 4 10" fill="none" stroke="#777" />
                    </svg>
                  </PackageBar>
                  <CanvasFrame>
                    <Canvas>
                      <Grid width="1695" height="667">
                        <path d="M15.500 0V667H1626.500V12.500H336.500V0Z" fill="#7acff5" />
                        <path d={grid.dots} fill="#f2fbff" shapeRendering="crispEdges" />
                        <path d={grid.crosses} fill="#e6f6fe" shapeRendering="crispEdges" />
                        <path d="M337 0H1700V12H337Z" fill="#fff" />
                        <path d="M15.500 0V670M15.500 12.500H1626.500V670M336.500 0V12.500" fill="none" stroke="#000" />
                        <path d="M443 208.500H510" stroke="#000" strokeWidth="1.200" />
                        <path d="M510 426.500H241.500V272" fill="none" stroke="#000" strokeWidth="1.200" strokeDasharray="6 4" />
                        <path d="M234 288 241.500 272 249 288" fill="none" stroke="#000" strokeWidth="1.200" />
                      </Grid>
                      <FloatText $size={13.5} $ls={0.22} $x={981} $y={243}>Package 4</FloatText>
                      <FloatText $size={13.5} $ls={0.3} $x={646} $y={420}>1.....10</FloatText>
                      <ClassNode $x={250} $y={311} $w={384} $h={190}>
                        <ClassTitle><NodeText $size={13.5} $ls={0.28} $bold>Empresa</NodeText></ClassTitle>
                      </ClassNode>
                      <ClassNode $x={702} $y={311} $w={401} $h={190}>
                        <ClassTitle><NodeText $size={13.5} $ls={0.22} $bold>Camion</NodeText></ClassTitle>
                        <Attributes>
                          <NodeText $size={13.5} $ls={0.11}>-ruedas : String</NodeText>
                          <NodeText $size={13.5} $ls={0.1}>-motor : String</NodeText>
                        </Attributes>
                      </ClassNode>
                      <ClassNode $x={702} $y={577} $w={412} $h={157}>
                        <ClassTitle><NodeText $size={13.5} $ls={0.15} $bold>Astillero</NodeText></ClassTitle>
                      </ClassNode>
                      <NoteNode>
                        <NoteShape width="558" height="314">
                          <path d="M.5 .5H538.500L557.500 19.500V313.500H.5Z" fill="#7acff5" stroke="#000" />
                          <path d="M538.500 .5V19.500H557.500" fill="none" stroke="#000" />
                        </NoteShape>
                        <NoteText>
                          {noteLines.map(([text, ls]) => (
                            <NoteLine key={text} $size={15} $ls={ls}>{text}</NoteLine>
                          ))}
                        </NoteText>
                      </NoteNode>
                      <Handle><i /><i /><i /></Handle>
                    </Canvas>
                    <ScrollColumn>
                      <SplitGrip />
                      <ScrollBtn $h={21}><Chevron w={11} h={8} up color="#555" /></ScrollBtn>
                      <ScrollThumb />
                      <ScrollTrack />
                      <ScrollBtn $h={21}><Chevron w={11} h={8} color="#555" /></ScrollBtn>
                      <svg width="20" height="21" viewBox="0 0 20 20">
                        <circle cx="10" cy="10.500" r="5.500" fill="#fff" stroke="#000" strokeWidth="2" />
                        <path d="M10 4V17M3 10.500H17" stroke="#000" strokeWidth="1.600" />
                        <path d="M10 .5 14 5.500H6ZM10 20.500 6 15.500H14ZM0 10.500 5 6.500V14.500ZM20 10.500 15 14.500V6.500Z" />
                      </svg>
                    </ScrollColumn>
                  </CanvasFrame>
                </DiagramPane>
              </Editor>
              <BottomPanel />
            </Main>
          </Body>
        </Window>
        <RightEdge><RightThumb /></RightEdge>
      </WorkArea>
      <Taskbar>
        <TaskCell $w={60}>
          <TaskIcon>
            <svg width="20" height="20"><path d="M0 3 8.500 1.700V9.500H0ZM9.500 1.500 20 0V9.500H9.500ZM0 10.500H8.500V18.300L0 17ZM9.500 10.500H20V20L9.500 18.500Z" fill="#fff" /></svg>
          </TaskIcon>
        </TaskCell>
        <TaskCell $w={60}>
          <TaskIcon>
            <svg width="20" height="20"><circle cx="10" cy="10" r="8.300" fill="none" stroke="#fff" strokeWidth="2.600" /></svg>
          </TaskIcon>
        </TaskCell>
        <TaskCell $w={67}>
          <TaskIcon>
            <svg width="30" height="30" viewBox="0 0 30 30">
              <path d="M15 1A14 14 0 1 0 15 29 14 14 0 1 0 15 1ZM15 4.500C19 4.500 20.500 9.500 20.500 15S19 25.500 15 25.500 8.500 20.500 8.500 15 11 4.500 15 4.500Z" fill="url(#opera)" />
              <path d="M11 4.500C16 2 21 6 21 15S16 28 11 25.500C18 31 29 25 29 15S18-1 11 4.500Z" fill="url(#operaDark)" />
            </svg>
          </TaskIcon>
        </TaskCell>
        <TaskCell $w={58}>
          <TaskIcon $running>
            <svg width="28" height="25" viewBox="0 0 28 25">
              <path d="M0 2Q0 1 1 1H10L13 4V7H0Z" fill="#e5a50a" />
              <path d="M0 5H11L13 3H27Q28 3 28 4V22H0Z" fill="#ffd866" />
              <path d="M5 24.500V15Q5 13 7 13H21Q23 13 23 15V24.500H18V18H10V24.500Z" fill="#3e9ae6" />
            </svg>
          </TaskIcon>
          <Underline $w={51} $split />
        </TaskCell>
        <TaskCell $w={65}>
          <TaskIcon>
            <svg width="28" height="28" viewBox="0 0 28 28">
              <path d="M4 .5H27.500V27.500H.5V4Z" fill="url(#word)" />
              <path d="M13 20 28 14 26 27H12Z" fill="#fff" />
              <text x="12" y="20" textAnchor="middle" fontSize="20" fontWeight="700" fontFamily="Liberation Sans, sans-serif" fill="#1b57b0">W</text>
            </svg>
          </TaskIcon>
        </TaskCell>
        <TaskCell $w={61} $active>
          <TaskIcon $running><VpLogo w={26} h={30} /></TaskIcon>
          <Underline $w={61} />
        </TaskCell>
        <TaskCell $w={62}>
          <TaskIcon $running>
            <svg width="30" height="30" viewBox="0 0 30 30">
              <circle cx="15" cy="15" r="15" fill="#f9c513" />
              <path d="M15 15 2 7.500A15 15 0 0 1 28 7.500H15Z" fill="#e33b2e" />
              <path d="M2 7.500A15 15 0 0 0 15 30L21.500 18.700 15 15 8.500 18.700Z" fill="#25a04b" />
              <path d="M28 7.500H15L21.500 18.700 15 30A15 15 0 0 0 28 7.500Z" fill="#f9c513" />
              <circle cx="15" cy="15" r="7.500" fill="#fff" />
              <circle cx="15" cy="15" r="5.800" fill="#2f7de8" />
            </svg>
          </TaskIcon>
          <Underline $w={51} />
        </TaskCell>
        <TaskCell $w={61}>
          <TaskIcon $running>
            <svg width="26" height="26" viewBox="0 0 26 26">
              <rect width="26" height="26" fill="url(#ij)" />
              <rect x="3.500" y="3.500" width="19" height="19" fill="#0a0010" />
              <text x="5" y="13" fontSize="10" fontWeight="700" fontFamily="Liberation Mono, monospace" fill="#fff" letterSpacing="-.6">IJ</text>
              <path d="M6 19.500H13" stroke="#fff" strokeWidth="1.300" />
            </svg>
          </TaskIcon>
          <Underline $w={51} />
        </TaskCell>
        <Spacer />
        <Tray>
          <TrayItem $w={30}><Chevron w={17} h={10} up color="#fff" sw={0.8} /></TrayItem>
          <TrayItem $w={30}>
            <svg width="16" height="17" viewBox="0 0 16 17">
              <path d="M1 15C1 7 7 1.500 15 1.500" fill="none" stroke="#aaa" />
              <path d="M4 16C4 10 9 5 15 5M8 16C8 12 11 9 15 9" fill="none" stroke="#eee" strokeWidth="1.200" />
              <circle cx="13.500" cy="14.500" r="1.700" fill="#fff" />
            </svg>
          </TrayItem>
          <TrayItem $w={28}>
            <svg width="19" height="15" viewBox="0 0 19 15">
              <path d="M.7 4.500H3L7 1V14L3 10.500H.7Z" fill="none" stroke="#fff" strokeWidth="1.100" />
              <path d="M11 4 18 11M18 4 11 11" stroke="#fff" strokeWidth="1.300" />
            </svg>
          </TrayItem>
          <TrayItem $w={48}><TrayLabel $size={14.5}>ESP</TrayLabel></TrayItem>
          <Clock>
            <TrayLabel $size={14.5} $ls={-0.55}>10:27</TrayLabel>
            <TrayLabel $size={14.5}>08-06-2023</TrayLabel>
          </Clock>
          <TrayItem $w={61}>
            <svg width="32" height="32" viewBox="0 0 32 32">
              <path d="M1 2H21V18H14L10 22V18H1Z" fill="#fff" />
              <path d="M5 6.500H17M5 10.500H17M5 14.500H13" stroke="#111" />
              <circle cx="20" cy="21" r="10" fill="#2e2e2e" fillOpacity=".92" stroke="#777" />
              <text x="20" y="26" textAnchor="middle" fontSize="14" fontFamily="Noto Sans, sans-serif" fill="#fff">1</text>
            </svg>
          </TrayItem>
          <ShowDesktop />
        </Tray>
      </Taskbar>
    </Desktop>
  );
}
